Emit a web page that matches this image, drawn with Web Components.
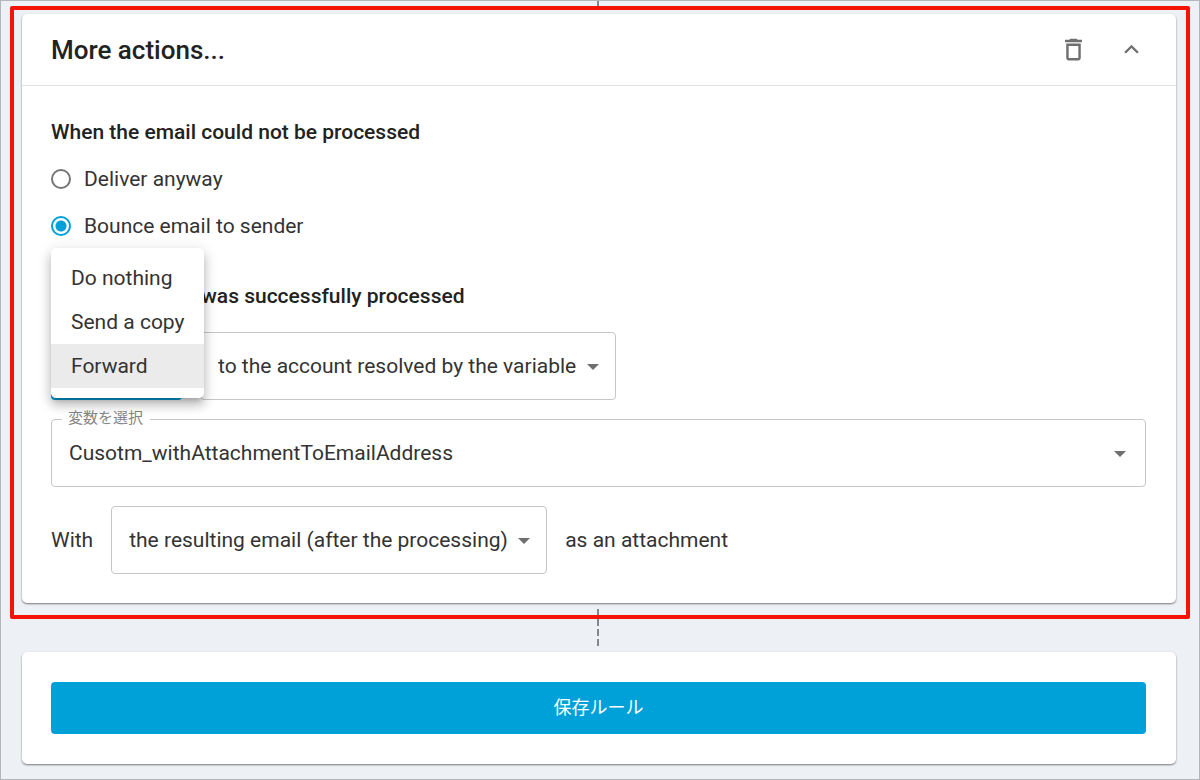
<!DOCTYPE html>
<html lang="ja">
<head>
<meta charset="utf-8">
<meta name="viewport" content="width=device-width, initial-scale=1">
<title>More actions</title>
<style>
  body {
    margin: 0;
    font-family: Roboto, "Noto Sans CJK JP", sans-serif;
    font-size: 21px;
    line-height: 24px;
    color: #333333;
    --accent: #00a0d8;
    --line: #c6c6c6;
    --icon: #6f6f6f;
  }
</style>
</head>
<body>
<rule-page>
  <focus-frame>
    <action-card heading="More actions...">
      <h3 slot="failed">When the email could not be processed</h3>
      <radio-option slot="failed" name="failed" label="Deliver anyway"></radio-option>
      <radio-option slot="failed" name="failed" label="Bounce email to sender" checked></radio-option>

      <h3 slot="done">When the email was successfully processed</h3>
      <field-row slot="done">
        <menu-select label="Action" options="Do nothing|Send a copy|Forward" value="Forward" open></menu-select>
        <select-box label="Target" value="to the account resolved by the variable"></select-box>
      </field-row>
      <select-box slot="done" caption="変数を選択" value="Cusotm_withAttachmentToEmailAddress" wide></select-box>
      <field-row slot="done">
        <span>With</span>
        <select-box label="Attached email" value="the resulting email (after the processing)"></select-box>
        <span>as an attachment</span>
      </field-row>
    </action-card>
  </focus-frame>
  <step-connector></step-connector>
  <save-card>保存ルール</save-card>
</rule-page>

<script>
function makeTemplate(html) {
  const template = document.createElement("template");
  template.innerHTML = html;
  return template;
}

class BaseElement extends HTMLElement {
  constructor() {
    super();
    this.attachShadow({ mode: "open" });
    this.shadowRoot.appendChild(this.constructor.template.content.cloneNode(true));
  }

  $(selector) {
    return this.shadowRoot.querySelector(selector);
  }
}

class RulePage extends BaseElement {
  static template = makeTemplate(`
    <style>
      :host {
        display: flex;
        flex-direction: column;
        box-sizing: border-box;
        min-height: 100vh;
        padding: 0 9px 14px;
        background: #edf0f4;
        border: 1px solid #b3b6b9;
      }
      .tail {
        align-self: center;
        width: 2px;
        height: 5px;
        margin-right: 4px;
        background: #85888b;
      }
    </style>
    <div class="tail"></div>
    <slot></slot>
  `);
}

class FocusFrame extends BaseElement {
  static template = makeTemplate(`
    <style>
      :host {
        display: block;
        position: relative;
        padding: 4px 10px 12px 8px;
        border: 4px solid #f41304;
        border-radius: 2px;
      }
    </style>
    <slot></slot>
  `);
}

class StepConnector extends BaseElement {
  static template = makeTemplate(`
    <style>
      :host {
        display: block;
        align-self: center;
        width: 2px;
        height: 37px;
        margin: -10px 4px 6px 0;
        background: repeating-linear-gradient(#85888b 0 7px, transparent 7px 10px);
      }
    </style>
  `);
}

class ActionCard extends BaseElement {
  static template = makeTemplate(`
    <style>
      :host {
        display: block;
        background: #ffffff;
        border-radius: 5px;
        box-shadow: 0 1px 2px rgba(0, 0, 0, 0.5);
      }
      header {
        display: flex;
        align-items: center;
        height: 71px;
        padding: 0 16px 0 29px;
        border-bottom: 1px solid #dfe2e4;
      }
      h2 {
        flex: 1;
        margin: 0;
        font-size: 26px;
        font-weight: 500;
        line-height: 32px;
        color: #222222;
      }
      button {
        display: flex;
        align-items: center;
        justify-content: center;
        width: 58px;
        height: 58px;
        padding: 0;
        border: 0;
        background: none;
        cursor: pointer;
      }
      svg {
        width: 29px;
        height: 29px;
        fill: var(--icon);
      }
      .body {
        display: flex;
        flex-direction: column;
        gap: 46px;
        padding: 34px 30px 29px 29px;
      }
      section {
        display: flex;
        flex-direction: column;
        gap: 23px;
      }
      .fields {
        gap: 19px;
      }
      ::slotted(h3) {
        margin: 0;
        font-size: 21px;
        font-weight: 500;
        color: #222222;
      }
      .fields ::slotted(h3) {
        margin-bottom: 5px;
      }
    </style>
    <header>
      <h2></h2>
      <button type="button" aria-label="Delete">
        <svg viewBox="0 0 24 24"><path d="M6 19c0 1.1.9 2 2 2h8c1.1 0 2-.9 2-2V7H6v12zM8 9h8v10H8V9zm7.500-5l-1-1h-5l-1 1H5v2h14V4h-3.500z"/></svg>
      </button>
      <button type="button" aria-label="Collapse">
        <svg viewBox="0 0 24 24"><path d="M12 8l-6 6 1.410 1.410L12 10.830l4.590 4.580L18 14z"/></svg>
      </button>
    </header>
    <div class="body">
      <section><slot name="failed"></slot></section>
      <section class="fields"><slot name="done"></slot></section>
    </div>
  `);

  connectedCallback() {
    this.$("h2").textContent = this.getAttribute("heading");
  }
}

class RadioOption extends BaseElement {
  static template = makeTemplate(`
    <style>
      :host {
        display: flex;
      }
      label {
        display: flex;
        align-items: center;
        gap: 13px;
        cursor: pointer;
      }
      input {
        appearance: none;
        box-sizing: border-box;
        width: 20px;
        height: 20px;
        margin: 0;
        border: 2px solid #757575;
        border-radius: 50%;
      }
      input:checked {
        border-color: var(--accent);
        background: radial-gradient(circle, var(--accent) 0 5px, transparent 6px);
      }
    </style>
    <label><input type="radio"><span></span></label>
  `);

  connectedCallback() {
    const input = this.$("input");
    input.name = this.getAttribute("name");
    input.checked = this.hasAttribute("checked");
    this.$("span").textContent = this.getAttribute("label");
    input.addEventListener("change", () => this._clearOthers());
  }

  // radios in separate shadow roots do not share a group
  _clearOthers() {
    this.parentNode.querySelectorAll("radio-option").forEach((option) => {
      if (option !== this && option.getAttribute("name") === this.getAttribute("name")) {
        option.$("input").checked = false;
      }
    });
  }
}

class FieldRow extends BaseElement {
  static template = makeTemplate(`
    <style>
      :host {
        display: flex;
        align-items: center;
        gap: 18px;
      }
    </style>
    <slot></slot>
  `);
}

const selectStyles = `
  :host {
    display: block;
    position: relative;
  }
  select {
    appearance: none;
    display: block;
    box-sizing: border-box;
    width: 100%;
    height: 68px;
    padding: 0 38px 0 17px;
    border: 1px solid var(--line);
    border-radius: 4px;
    background: #ffffff;
    color: inherit;
    font: inherit;
  }
  .arrow {
    position: absolute;
    top: 32px;
    right: 17px;
    width: 12px;
    height: 6px;
    fill: var(--icon);
    pointer-events: none;
  }
`;

class SelectBox extends BaseElement {
  static template = makeTemplate(`
    <style>
      ${selectStyles}
      label {
        position: absolute;
        top: -13px;
        left: 11px;
        padding: 0 7px 0 6px;
        background: #ffffff;
        color: #858585;
        font-size: 15px;
      }
      label:empty {
        display: none;
      }
      :host([wide]) .arrow {
        right: 20px;
      }
    </style>
    <select id="field"></select>
    <label for="field"></label>
    <svg class="arrow" viewBox="0 0 12 6"><path d="M0 0h12L6 6z"/></svg>
  `);

  connectedCallback() {
    const select = this.$("select");
    select.add(new Option(this.getAttribute("value")));
    if (this.hasAttribute("caption")) {
      this.$("label").textContent = this.getAttribute("caption");
    } else {
      select.setAttribute("aria-label", this.getAttribute("label"));
    }
  }
}

class MenuSelect extends BaseElement {
  static template = makeTemplate(`
    <style>
      ${selectStyles}
      :host {
        width: 131px;
      }
      .trigger {
        box-sizing: border-box;
        display: block;
        width: 100%;
        height: 68px;
        padding: 0 17px;
        border: 1px solid var(--line);
        border-radius: 4px;
        background: #ffffff;
        color: inherit;
        font: inherit;
        text-align: left;
      }
      :host([open]) .trigger {
        border: 2px solid var(--accent);
      }
      .menu {
        display: none;
        position: absolute;
        z-index: 1;
        bottom: 2px;
        left: 0;
        padding: 8px 0 10px;
        border-radius: 5px;
        background: #ffffff;
        box-shadow: 0 5px 5px -3px rgba(0, 0, 0, 0.2), 0 8px 10px 1px rgba(0, 0, 0, 0.14), 0 3px 14px 2px rgba(0, 0, 0, 0.12);
      }
      :host([open]) .menu {
        display: block;
      }
      .menu button {
        display: block;
        width: 100%;
        height: 44px;
        padding: 0 20px;
        border: 0;
        background: none;
        color: inherit;
        font: inherit;
        text-align: left;
        white-space: nowrap;
      }
      .menu button[aria-selected="true"] {
        background: #ebebeb;
      }
    </style>
    <button type="button" class="trigger" aria-haspopup="listbox"></button>
    <svg class="arrow" viewBox="0 0 12 6"><path d="M0 0h12L6 6z"/></svg>
    <div class="menu" role="listbox"></div>
  `);

  connectedCallback() {
    const trigger = this.$(".trigger");
    trigger.setAttribute("aria-label", this.getAttribute("label"));
    trigger.addEventListener("click", () => this.toggleAttribute("open"));

    this.getAttribute("options").split("|").forEach((text) => {
      const item = document.createElement("button");
      item.type = "button";
      item.textContent = text;
      item.setAttribute("role", "option");
      item.addEventListener("click", () => {
        this._select(text);
        this.removeAttribute("open");
        trigger.textContent = text;
      });
      this.$(".menu").appendChild(item);
    });
    this._select(this.getAttribute("value"));
  }

  _select(text) {
    this.shadowRoot.querySelectorAll(".menu button").forEach((item) => {
      item.setAttribute("aria-selected", String(item.textContent === text));
    });
  }
}

class SaveCard extends BaseElement {
  static template = makeTemplate(`
    <style>
      :host {
        display: block;
        margin: 0 14px 0 12px;
        padding: 30px 30px 30px 29px;
        border-radius: 5px;
        background: #ffffff;
        box-shadow: 0 1px 2px rgba(0, 0, 0, 0.5);
      }
      button {
        display: block;
        width: 100%;
        height: 52px;
        border: 0;
        border-radius: 4px;
        background: var(--accent);
        color: #ffffff;
        font: inherit;
        font-size: 18px;
        cursor: pointer;
      }
    </style>
    <button type="button"><slot></slot></button>
  `);
}

customElements.define("rule-page", RulePage);
customElements.define("focus-frame", FocusFrame);
customElements.define("step-connector", StepConnector);
customElements.define("action-card", ActionCard);
customElements.define("radio-option", RadioOption);
customElements.define("field-row", FieldRow);
customElements.define("select-box", SelectBox);
customElements.define("menu-select", MenuSelect);
customElements.define("save-card", SaveCard);
</script>
</body>
</html>
